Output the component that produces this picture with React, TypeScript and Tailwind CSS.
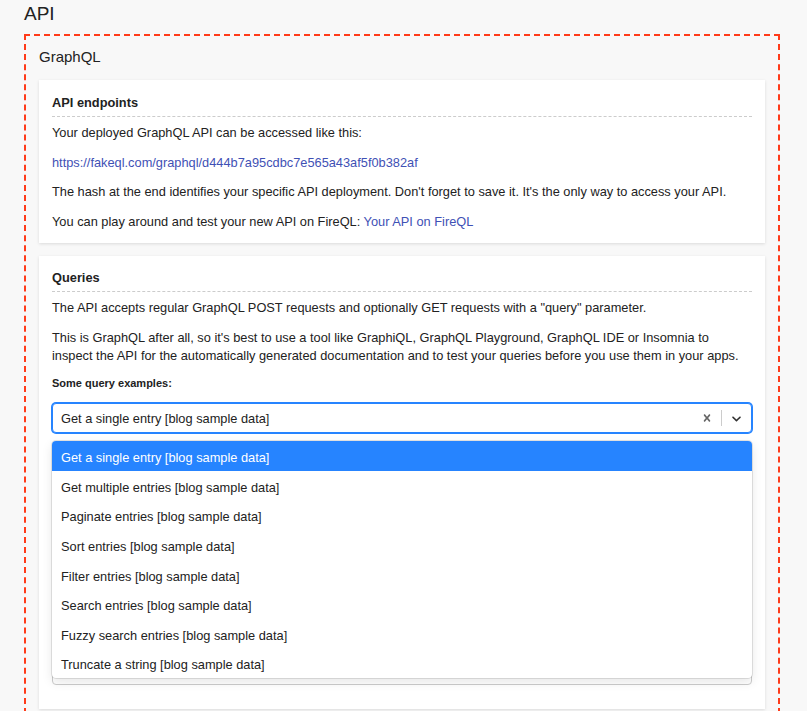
import React from "react";

const items = [
  "Get a single entry [blog sample data]",
  "Get multiple entries [blog sample data]",
  "Paginate entries [blog sample data]",
  "Sort entries [blog sample data]",
  "Filter entries [blog sample data]",
  "Search entries [blog sample data]",
  "Fuzzy search entries [blog sample data]",
  "Truncate a string [blog sample data]",
];

function ClearIcon() {
  return (
    <svg viewBox="0 0 20 20" width="14" height="14" fill="#666">
      <path d="M14.348 14.849c-0.469 0.469-1.229 0.469-1.697 0l-2.651-3.030-2.651 3.029c-0.469 0.469-1.229 0.469-1.697 0-0.469-0.469-0.469-1.229 0-1.697l2.758-3.15-2.759-3.152c-0.469-0.469-0.469-1.228 0-1.697s1.228-0.469 1.697 0l2.652 3.031 2.651-3.031c0.469-0.469 1.228-0.469 1.697 0s0.469 1.229 0 1.697l-2.758 3.152 2.758 3.15c0.469 0.469 0.469 1.229 0 1.698z" />
    </svg>
  );
}

function ChevronIcon() {
  return (
    <svg viewBox="0 0 20 20" width="15" height="15" fill="#333">
      <path d="M4.516 7.548c0.436-0.446 1.043-0.481 1.576 0l3.908 3.747 3.908-3.747c0.533-0.481 1.141-0.446 1.574 0 0.436 0.445 0.408 1.197 0 1.615-0.406 0.418-4.695 4.502-4.695 4.502-0.217 0.223-0.502 0.335-0.787 0.335s-0.57-0.112-0.789-0.335c0 0-4.287-4.084-4.695-4.502s-0.436-1.17 0-1.615z" />
    </svg>
  );
}

export default function App() {
  return (
    <div className="h-[711px] overflow-hidden bg-[#f8f8f8] text-[#222] font-['Liberation_Sans',Arial,sans-serif]">
      <div className="pl-[24px]">
        <h1 className="h-[34px] pt-[2px] text-[19px] leading-[24px] font-normal">API</h1>
        <div className="w-[756px] border-2 border-dashed border-[#ff3b1a] px-[13px] pt-[12px] pb-[13px]">
          <h2 className="text-[15px] leading-[18px] mb-[14px]">GraphQL</h2>

          <div className="bg-white shadow-[0_1px_3px_rgba(0,0,0,0.12)] px-[13px] pt-[14px] pb-[12px] text-[12.8px] leading-[18px]">
            <h3 className="font-bold pb-[4px] border-b border-dashed border-[#ccc]">API endpoints</h3>
            <p className="mt-[7px]">Your deployed GraphQL API can be accessed like this:</p>
            <p className="mt-[11.7px] text-[#3f51b5]">https://fakeql.com/graphql/d444b7a95cdbc7e565a43af5f0b382af</p>
            <p className="mt-[11.7px]">
              The hash at the end identifies your specific API deployment. Don't forget to save it. It's the only way to access your API.
            </p>
            <p className="mt-[11.7px]">
              You can play around and test your new API on FireQL: <span className="text-[#3f51b5]">Your API on FireQL</span>
            </p>
          </div>

          <div className="mt-[13px] bg-white shadow-[0_1px_3px_rgba(0,0,0,0.12)] px-[13px] pt-[13px] pb-[24px] text-[12.8px] leading-[18px]">
            <h3 className="font-bold pb-[4px] border-b border-dashed border-[#ccc]">Queries</h3>
            <p className="mt-[7px]">
              The API accepts regular GraphQL POST requests and optionally GET requests with a "query" parameter.
            </p>
            <p className="mt-[12px]">
              This is GraphQL after all, so it's best to use a tool like GraphiQL, GraphQL Playground, GraphQL IDE or Insomnia to inspect the API for the automatically generated documentation and to test your queries before you use them in your apps.
            </p>
            <p className="mt-[10px] text-[11px] font-bold leading-[16px]">Some query examples:</p>

            <div className="relative mt-[12px]">
              <div className="flex h-[30px] items-center rounded-[4px] border border-[#2684ff] shadow-[0_0_0_1px_#2684ff] bg-white">
                <div className="flex-1 pl-[8px] pt-[1px]">Get a single entry [blog sample data]</div>
                <div className="flex w-[28px] items-center justify-center">
                  <ClearIcon />
                </div>
                <div className="h-[16px] w-px bg-[#ccc]" />
                <div className="flex w-[29px] items-center justify-center">
                  <ChevronIcon />
                </div>
              </div>

              <div className="absolute left-0 right-0 top-[38px] z-10 overflow-hidden rounded-[4px] bg-white shadow-[0_0_0_1px_rgba(0,0,0,0.1),0_4px_11px_rgba(0,0,0,0.1)]">
                {items.map((it, i) => (
                  <div
                    key={it}
                    className={
                      i === 0
                        ? "flex h-[30px] items-center px-[9px] pt-[4px] bg-[#2684ff] text-white"
                        : "flex h-[29.6px] items-center px-[9px] pt-[4px]"
                    }
                  >
                    {it}
                  </div>
                ))}
              </div>
            </div>

            <div className="mt-[12px] h-[240px] rounded-[4px] border border-[#ccc] bg-white" />
          </div>
        </div>
      </div>
    </div>
  );
}
